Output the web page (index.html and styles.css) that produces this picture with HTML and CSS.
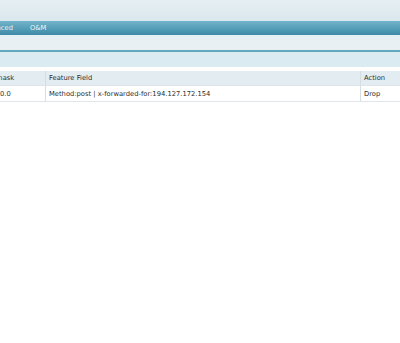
FILE: index.html
```html
<!DOCTYPE html>
<html lang="en">
<head>
    <meta charset="UTF-8">
    <title>Blacklist</title>
    <link rel="stylesheet" href="styles.css">
</head>
<body>
    <div class="top-header"></div>
    <div class="nav-bar">
        <span class="nav-item nav-cut">Advanced</span>
        <span class="nav-item">O&amp;M</span>
    </div>
    <div class="sub-bar"></div>
    <div class="title-bar"></div>

    <div class="table-wrap">
        <table class="rule-table">
            <tr>
                <th class="col-mask">Subnet mask</th>
                <th class="col-field">Feature Field</th>
                <th class="col-action">Action</th>
            </tr>
            <tr>
                <td class="col-mask">255.255.0.0</td>
                <td class="col-field">Method:post | x-forwarded-for:194.127.172.154</td>
                <td class="col-action">Drop</td>
            </tr>
        </table>
    </div>
</body>
</html>
```

FILE: styles.css
```css
body {
    margin: 0;
    font-family: "DejaVu Sans", Tahoma, sans-serif;
    font-size: 6.75px;
    color: #2e2e2e;
    background: #fff;
    overflow: hidden;
}

.top-header {
    height: 21px;
    background: linear-gradient(#e6eff3, #dae7ed);
}

.nav-bar {
    height: 14px;
    display: flex;
    align-items: center;
    gap: 17px;
    background: linear-gradient(#72b4ca, #3e8aa9);
    color: #e8f4f8;
}

.nav-item {
    white-space: nowrap;
}

.nav-cut {
    width: 13px;
    overflow: hidden;
    direction: rtl;
    flex-shrink: 0;
}

.sub-bar {
    height: 15px;
    background: #e8f0f4;
    border-bottom: 2px solid #62a9c0;
}

.title-bar {
    height: 15px;
    background: #daebf1;
    margin-bottom: 4px;
}

.table-wrap {
    overflow: hidden;
}

.rule-table {
    width: calc(100% + 33px);
    margin-left: -33px;
    border-collapse: collapse;
    table-layout: fixed;
}

.rule-table th,
.rule-table td {
    text-align: left;
    font-weight: normal;
    padding: 0 3px;
    white-space: nowrap;
    overflow: hidden;
    border-right: 1px solid #d3dde2;
    border-bottom: 1px solid #dfe6e9;
}

.rule-table th {
    height: 14px;
    background: #e3ecf0;
}

.rule-table td {
    height: 15px;
}

.col-mask {
    width: 72px;
}

.col-action {
    width: 33px;
    border-right: none !important;
}
```
